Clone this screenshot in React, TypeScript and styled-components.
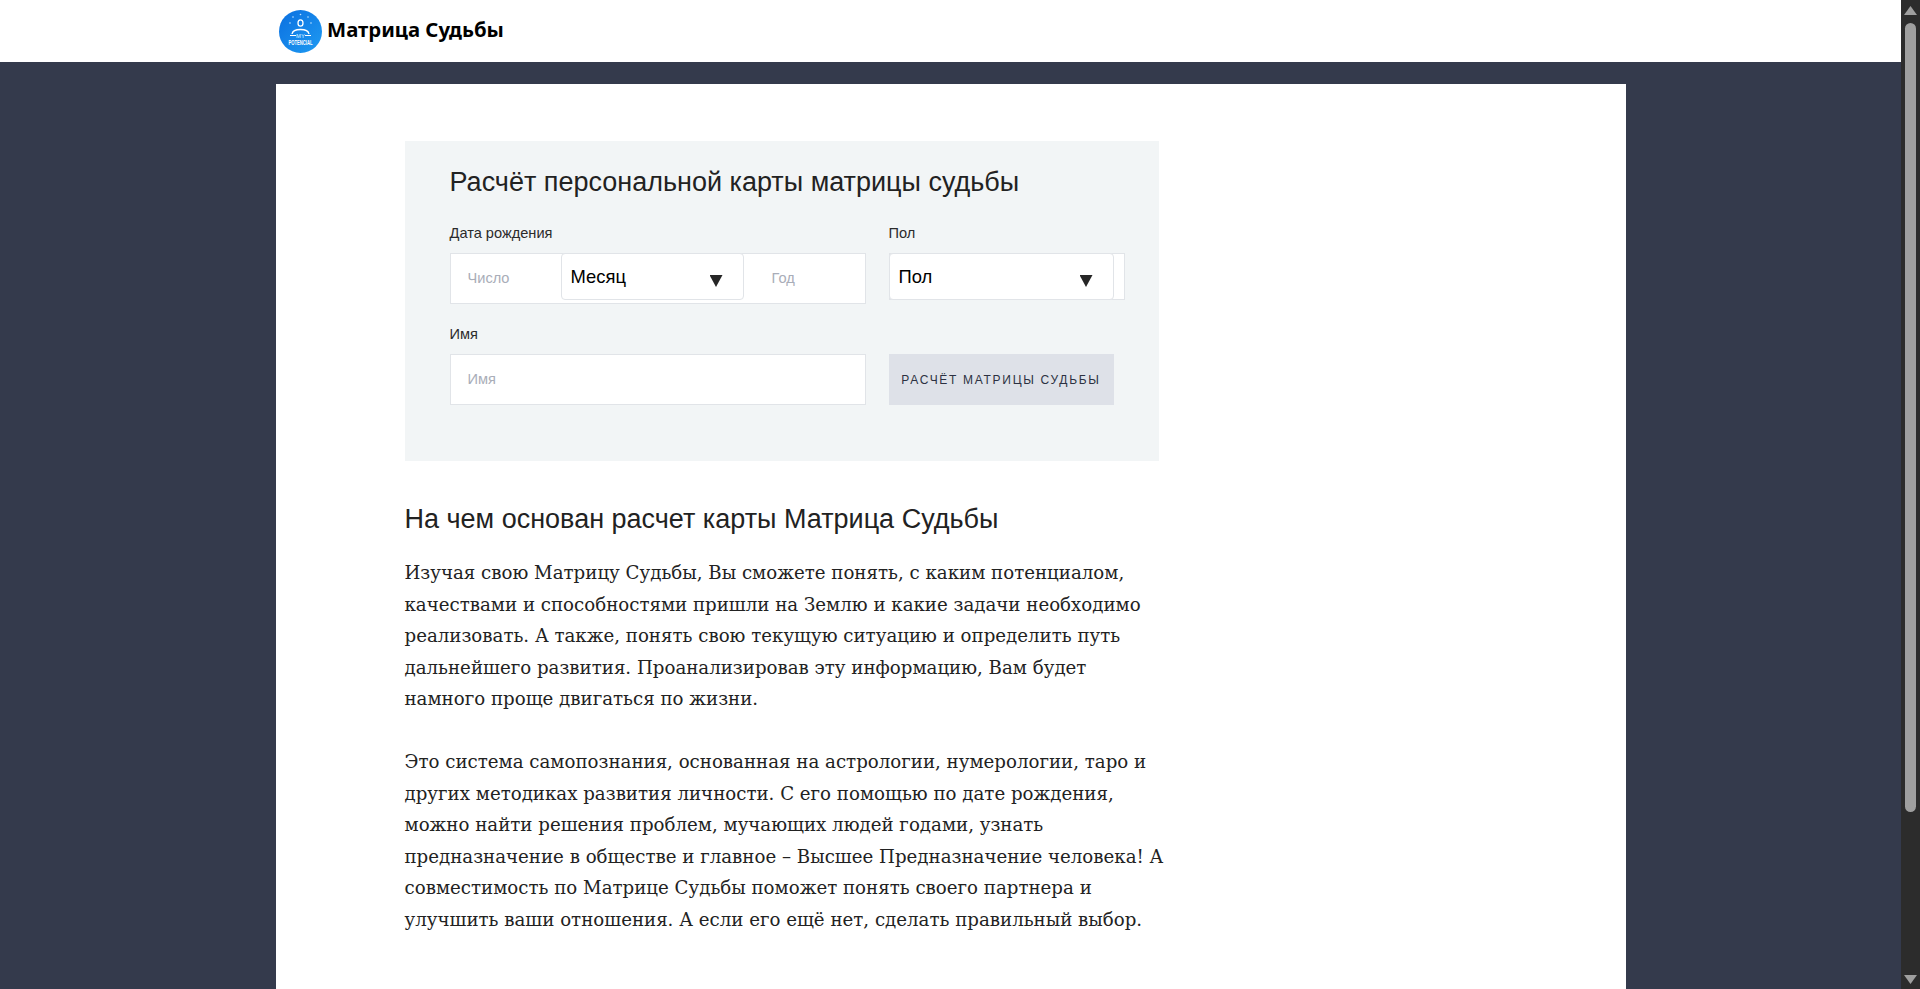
import React from 'react';
import styled, {createGlobalStyle} from 'styled-components';

const GlobalStyle = createGlobalStyle`
	html, body {
		margin: 0;
		height: 100%;
		overflow: hidden;
		background: #343a4c;
	}
	* {
		box-sizing: border-box;
	}
`

const Page = styled.div`
	display: flex;
	height: 989px;
	overflow: hidden;
`
const Main = styled.div`
	flex: 1;
	min-width: 0;
	background: #343a4c;
	font-family: "Liberation Sans", Arial, sans-serif;
`
const Header = styled.header`
	display: flex;
	align-items: center;
	gap: 5px;
	height: 62px;
	padding-left: 279px;
	background: #fff;
`
const Brand = styled.span`
	padding-bottom: 4px;
	font-family: "Noto Sans", sans-serif;
	font-size: 20.3px;
	font-weight: 700;
	color: #000;
`
const Sheet = styled.main`
	width: 1350px;
	height: 905px;
	margin: 22px auto 0;
	padding: 57px 129px 0;
	background: #fff;
`
const Column = styled.div`
	width: 754px;
`
const FormCard = styled.form`
	height: 320px;
	padding: 23px 45px 0;
	background: #f2f5f6;
`
const FormTitle = styled.h1`
	margin: 0 0 23px;
	font-size: 27px;
	font-weight: 400;
	line-height: 36px;
	color: #222;
`
const FormGrid = styled.div`
	display: grid;
	grid-template-columns: 416px 236px;
	column-gap: 23px;
	row-gap: 20px;
`
const Field = styled.div`
	display: flex;
	flex-direction: column;
	height: 81px;
`
const Label = styled.label`
	height: 20px;
	margin-bottom: 10px;
	font-size: 14.6px;
	line-height: 20px;
	color: #2b2b2b;
`
const DateGroup = styled.div`
	display: flex;
	height: 51px;
	background: #fff;
	border: 1px solid #e1e4e8;
`
const GenderGroup = styled.div`
	height: 47px;
	background: #fff;
	border: 1px solid #e1e4e8;
`
const TextInput = styled.input<{ $width?: string; $indent?: string }>`
	width: ${props => props.$width || '100%'};
	height: ${props => props.$width ? '100%' : '51px'};
	padding: 0 0 1px ${props => props.$indent || '17px'};
	background: #fff;
	border: ${props => props.$width ? 'none' : '1px solid #e1e4e8'};
	outline: none;
	font-family: inherit;
	font-size: 14.6px;

	&::placeholder {
		color: #a9adb8;
		opacity: 1;
	}
`
const SelectWrap = styled.div<{ $width: string }>`
	position: relative;
	width: ${props => props.$width};
	height: 47px;
	margin: -1px 0 0 -1px;
	flex-shrink: 0;
`
const Select = styled.select`
	appearance: none;
	display: block;
	width: 100%;
	height: 100%;
	padding: 0 0 1px 9px;
	background: #fff;
	border: 1px solid #e1e4e8;
	border-radius: 4px;
	outline: none;
	font-family: "Liberation Sans", Arial, sans-serif;
	font-size: 18.4px;
	color: #000;
`
const Arrow = styled.span`
	position: absolute;
	top: 22px;
	right: 21px;
	width: 13px;
	height: 12px;
	background: #262626;
	clip-path: polygon(0 0, 100% 0, 50% 100%);
	pointer-events: none;
`
const SubmitButton = styled.button`
	width: 225px;
	height: 51px;
	padding: 0;
	background: #dee1e8;
	border: none;
	font-family: inherit;
	font-size: 12px;
	letter-spacing: 1.7px;
	color: #2c3142;
`
const SectionTitle = styled.h2`
	margin: 40px 0 20px;
	font-size: 27px;
	font-weight: 400;
	line-height: 36px;
	color: #222;
`
const Paragraph = styled.p`
	margin: 0 -6px 31.5px 0;
	font-family: "DejaVu Serif", "Liberation Serif", serif;
	font-size: 18.2px;
	line-height: 31.5px;
	color: #222;
`
const ScrollTrack = styled.aside`
	display: flex;
	flex-direction: column;
	align-items: center;
	width: 19px;
	flex-shrink: 0;
	padding-top: 6px;
	background: #2c2c2c;
`
const ScrollThumb = styled.div`
	width: 11px;
	height: 789px;
	margin: 8px 0 163px;
	background: #9f9f9f;
	border-radius: 6px;
`
const ScrollArrow = styled.svg`
	display: block;
	width: 13px;
	height: 9px;
`

const Logo = () => (
	<svg width="43" height="43" viewBox="0 0 43 43">
		<defs>
			<linearGradient id="logoFill" x1="0" y1="0" x2="1" y2="1">
				<stop offset="0" stopColor="#0b6fe0"/>
				<stop offset="1" stopColor="#1e9bf2"/>
			</linearGradient>
		</defs>
		<circle cx="21.5" cy="21.5" r="21.5" fill="url(#logoFill)"/>
		<g fill="#bfe3ff">
			<circle cx="21.5" cy="4.5" r="0.8"/>
			<circle cx="14" cy="7" r="0.8"/>
			<circle cx="29" cy="7" r="0.8"/>
			<circle cx="11" cy="13" r="0.8"/>
			<circle cx="32" cy="13" r="0.8"/>
		</g>
		<ellipse cx="21.5" cy="13" rx="2.5" ry="3.2" fill="none" stroke="#fff" strokeWidth="1.3"/>
		<path d="M13 24 C14 18 29 18 30 24" fill="none" stroke="#fff" strokeWidth="1.3"/>
		<path d="M11 25.5 L17 25.5 M26 25.5 L32 25.5" fill="none" stroke="#fff" strokeWidth="1.2"/>
		<text x="21.5" y="27.5" textAnchor="middle" fontFamily="Liberation Sans" fontSize="6" fontWeight="700" fill="#9fd8ff">MY</text>
		<text transform="translate(21.5 35) scale(0.83 1.35)" textAnchor="middle" fontFamily="Liberation Sans" fontSize="5" fontWeight="700" fill="#fff">POTENCIAL</text>
	</svg>
)

const App: React.FC = () => {
	return (
		<Page>
			<GlobalStyle/>
			<Main>
				<Header>
					<Logo/>
					<Brand>Матрица Судьбы</Brand>
				</Header>
				<Sheet>
					<Column>
						<FormCard>
							<FormTitle>Расчёт персональной карты матрицы судьбы</FormTitle>
							<FormGrid>
								<Field>
									<Label>Дата рождения</Label>
									<DateGroup>
										<TextInput $width="111px" placeholder="Число"/>
										<SelectWrap $width="183px">
											<Select defaultValue="month">
												<option value="month">Месяц</option>
											</Select>
											<Arrow/>
										</SelectWrap>
										<TextInput $width="119px" $indent="28px" placeholder="Год"/>
									</DateGroup>
								</Field>
								<Field>
									<Label>Пол</Label>
									<GenderGroup>
										<SelectWrap $width="225px">
											<Select defaultValue="gender">
												<option value="gender">Пол</option>
											</Select>
											<Arrow/>
										</SelectWrap>
									</GenderGroup>
								</Field>
								<Field>
									<Label>Имя</Label>
									<TextInput placeholder="Имя"/>
								</Field>
								<Field>
									<Label>&nbsp;</Label>
									<SubmitButton type="button">РАСЧЁТ МАТРИЦЫ СУДЬБЫ</SubmitButton>
								</Field>
							</FormGrid>
						</FormCard>
						<SectionTitle>На чем основан расчет карты Матрица Судьбы</SectionTitle>
						<Paragraph>
							Изучая свою Матрицу Судьбы, Вы сможете понять, с каким потенциалом, качествами и способностями пришли на Землю и какие задачи необходимо реализовать. А также, понять свою текущую ситуацию и определить путь дальнейшего развития. Проанализировав эту информацию, Вам будет<br/>намного проще двигаться по жизни.
						</Paragraph>
						<Paragraph>
							Это система самопознания, основанная на астрологии, нумерологии, таро и других методиках развития личности. С его помощью по дате рождения, можно найти решения проблем, мучающих людей годами, узнать предназначение в обществе и главное – Высшее Предназначение человека! А совместимость по Матрице Судьбы поможет понять своего партнера и улучшить ваши отношения. А если его ещё нет, сделать правильный выбор.
						</Paragraph>
					</Column>
				</Sheet>
			</Main>
			<ScrollTrack>
				<ScrollArrow viewBox="0 0 13 9"><path d="M6.5 0 L13 9 L0 9 Z" fill="#9f9f9f"/></ScrollArrow>
				<ScrollThumb/>
				<ScrollArrow viewBox="0 0 13 9"><path d="M0 0 L13 0 L6.5 9 Z" fill="#9f9f9f"/></ScrollArrow>
			</ScrollTrack>
		</Page>
	);
}

export default App;
